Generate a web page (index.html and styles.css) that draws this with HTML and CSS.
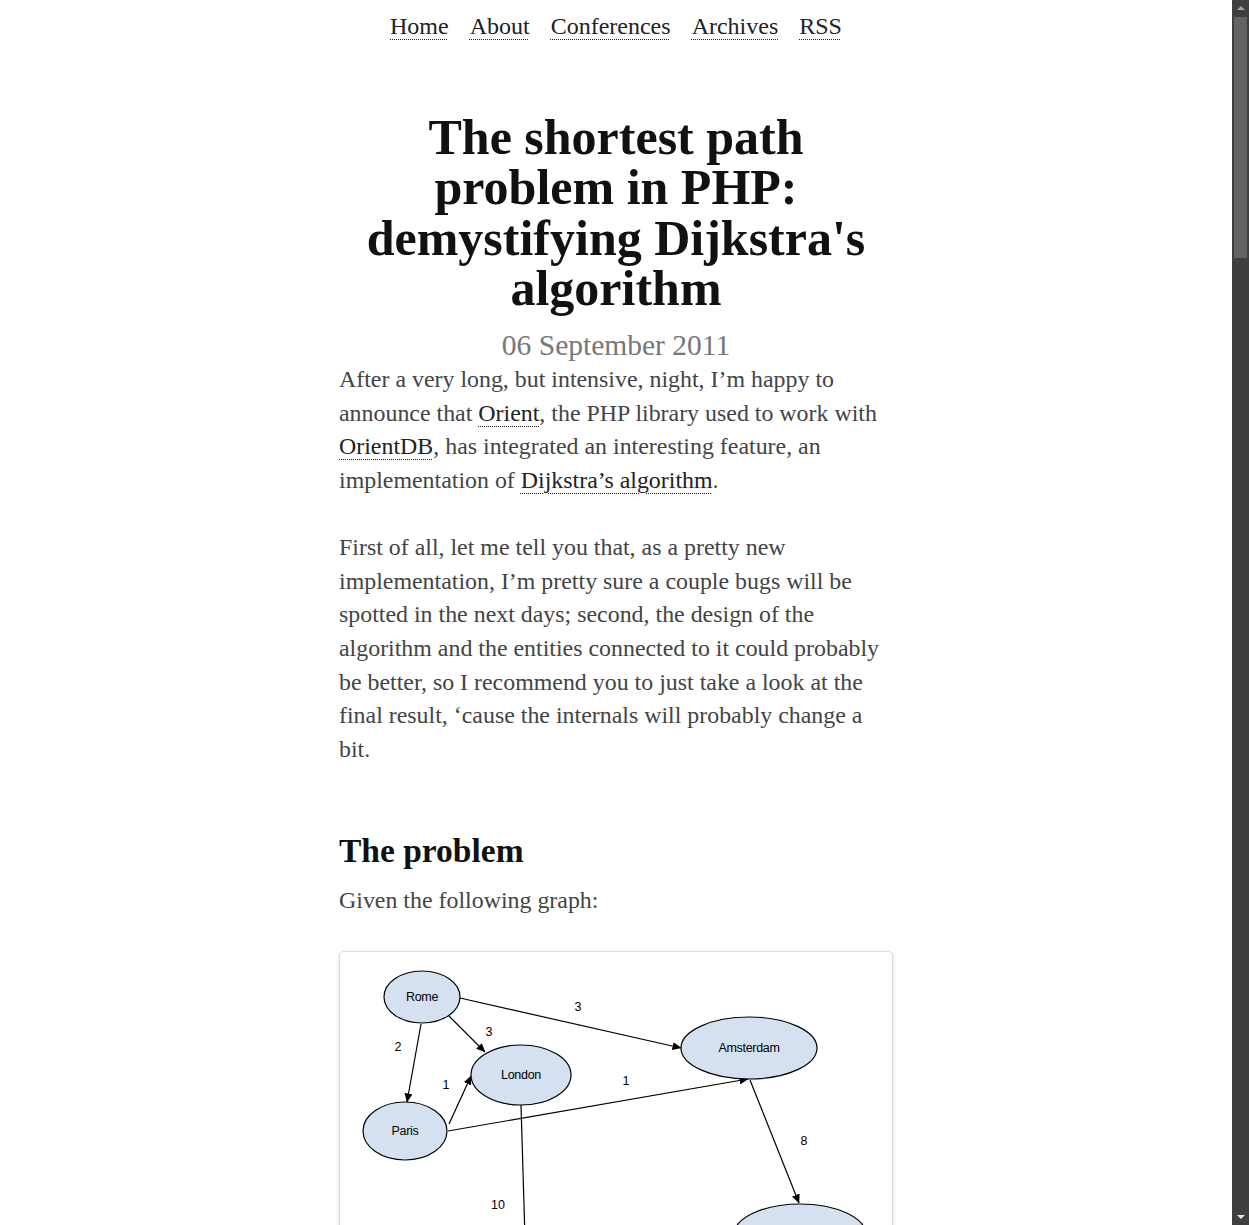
FILE: index.html
```html
<!DOCTYPE html>
<html lang="en">
<head>
<meta charset="utf-8">
<title>The shortest path problem in PHP: demystifying Dijkstra's algorithm</title>
<link rel="stylesheet" href="styles.css">
</head>
<body>
<nav class="site-nav">
  <a href="#">Home</a>
  <a href="#">About</a>
  <a href="#">Conferences</a>
  <a href="#">Archives</a>
  <a href="#">RSS</a>
</nav>

<main class="post">
  <h1 class="post-title">The shortest path problem in PHP: demystifying Dijkstra's algorithm</h1>
  <div class="post-date">06 September 2011</div>

  <p>After a very long, but intensive, night, I’m happy to announce that <a href="#">Orient</a>, the PHP library used to work with <a href="#">OrientDB</a>, has integrated an interesting feature, an implementation of <a href="#">Dijkstra’s algorithm</a>.</p>

  <p>First of all, let me tell you that, as a pretty new implementation, I’m pretty sure a couple bugs will be spotted in the next days; second, the design of the algorithm and the entities connected to it could probably be better, so I recommend you to just take a look at the final result, ‘cause the internals will probably change a bit.</p>

  <h2 class="section-title">The problem</h2>
  <p class="tight">Given the following graph:</p>

  <figure class="graph-figure">
    <svg class="graph" viewBox="0 0 552 420" xmlns="http://www.w3.org/2000/svg">
      <defs>
        <marker id="arrow" markerWidth="9" markerHeight="8" refX="8.5" refY="4" orient="auto" markerUnits="userSpaceOnUse">
          <path d="M0,0 L9,4 L0,8 z" fill="#000"/>
        </marker>
      </defs>
      <g stroke="#000" stroke-width="1.2" fill="none">
        <line x1="120" y1="46" x2="341" y2="96" marker-end="url(#arrow)"/>
        <line x1="109" y1="64" x2="145" y2="100" marker-end="url(#arrow)"/>
        <line x1="81" y1="72" x2="67" y2="150" marker-end="url(#arrow)"/>
        <line x1="109" y1="172" x2="131" y2="124" marker-end="url(#arrow)"/>
        <line x1="108" y1="179" x2="408" y2="127" marker-end="url(#arrow)"/>
        <line x1="410" y1="128" x2="459" y2="251" marker-end="url(#arrow)"/>
        <line x1="181" y1="153" x2="187" y2="352" marker-end="url(#arrow)"/>
      </g>
      <g fill="#d5e1f0" stroke="#000" stroke-width="1.2">
        <ellipse cx="82" cy="45" rx="38" ry="26"/>
        <ellipse cx="181" cy="123" rx="50" ry="30"/>
        <ellipse cx="65" cy="179" rx="42" ry="29"/>
        <ellipse cx="409" cy="96" rx="68" ry="31"/>
        <ellipse cx="460" cy="283" rx="66" ry="31"/>
        <ellipse cx="188" cy="383" rx="62" ry="30"/>
      </g>
      <g class="node-label" text-anchor="middle">
        <text x="82" y="49">Rome</text>
        <text x="181" y="127">London</text>
        <text x="65" y="183">Paris</text>
        <text x="409" y="100">Amsterdam</text>
        <text x="460" y="287">Los Angeles</text>
        <text x="188" y="387">New York</text>
      </g>
      <g class="edge-label" text-anchor="middle">
        <text x="238" y="59">3</text>
        <text x="149" y="84">3</text>
        <text x="58" y="99">2</text>
        <text x="106" y="137">1</text>
        <text x="286" y="133">1</text>
        <text x="464" y="193">8</text>
        <text x="158" y="257">10</text>
      </g>
    </svg>
  </figure>

  <p>which is the shortest path to go from Rome to Los Angeles? Although it seems an easy question to answer by just looking at the graph, things get harder when the graph grows to hundreds or thousands of vertices.</p>

  <h2 class="section-title">The solution</h2>
  <p>Dijkstra’s algorithm solves the single-source shortest path problem for a graph with non-negative edge path costs, producing a shortest path tree: for a given source vertex, it finds the path with the lowest cost between that vertex and every other vertex.</p>

  <p>With Orient, you only need to build the graph, declare the vertices and connect them, specifying the distance of each connection:</p>

  <pre class="code">&lt;?php

$graph  = new Graph();

$rome       = new Vertex('Rome');
$paris      = new Vertex('Paris');
$london     = new Vertex('London');
$amsterdam  = new Vertex('Amsterdam');
$newYork    = new Vertex('New York');
$losAngeles = new Vertex('Los Angeles');

$rome-&gt;connect($paris, 2);
$rome-&gt;connect($london, 3);
$rome-&gt;connect($amsterdam, 3);
$paris-&gt;connect($london, 1);
$paris-&gt;connect($amsterdam, 1);
$london-&gt;connect($newYork, 10);
$amsterdam-&gt;connect($losAngeles, 8);
$newYork-&gt;connect($losAngeles, 2);</pre>

  <p>then, you add all the vertices to the graph and instantiate the algorithm, telling it which is the starting point and which is the destination:</p>

  <pre class="code">$graph-&gt;add($rome);
$graph-&gt;add($paris);
$graph-&gt;add($london);
$graph-&gt;add($amsterdam);
$graph-&gt;add($newYork);
$graph-&gt;add($losAngeles);

$algorithm = new Dijkstra($graph);
$algorithm-&gt;setStartingVertex($rome);
$algorithm-&gt;setEndingVertex($losAngeles);

echo $algorithm-&gt;getLiteralShortestPath();
// Rome - Paris - Amsterdam - Los Angeles

echo $algorithm-&gt;getDistance();
// 11</pre>

  <p>As you see, the API is pretty straightforward: you get the literal representation of the path, a string, or an array of vertices, with <code>getShortestPath()</code>, if you need to work with the objects.</p>

  <h2 class="section-title">How it works</h2>
  <p>The algorithm starts by marking every vertex with an infinite distance, except the starting one, which gets a distance of 0; then, it picks the closest non-visited vertex, calculates the distance of its neighbours, and updates them if the new path is shorter than the one previously found.</p>

  <p>When every vertex has been visited, you just need to walk back from the ending vertex, following the previous vertices that the algorithm stored, to reconstruct the shortest path.</p>

  <p>This is, basically, the whole thing: the implementation is less than 200 lines of code and you can read it on GitHub, along with the tests that I wrote to verify it works as expected.</p>

  <h2 class="section-title">What’s next</h2>
  <p>In the next days I’ll try to clean up the code a bit, write some more tests and, probably, integrate the algorithm with the graph loaded directly from OrientDB, so that you will be able to calculate the shortest path between two records stored in the database.</p>

  <p>If you find bugs or have suggestions, feel free to open an issue or send a pull request: every contribution is welcome.</p>

  <p>In the mood for some more reading?</p>
  <p>...or check the archives.</p>
</main>

<div class="fake-scrollbar" aria-hidden="true">
  <span class="sb-arrow sb-up"></span>
  <span class="sb-thumb"></span>
  <span class="sb-arrow sb-down"></span>
</div>
</body>
</html>
```

FILE: styles.css
```css
html {
  background: #fff;
}

body {
  margin: 8px 17px 0 0;
  font-family: "Liberation Serif", "Times New Roman", serif;
  color: #444;
}

.site-nav {
  display: flex;
  justify-content: center;
  gap: 21px;
  font-size: 24px;
  line-height: 36px;
}

.site-nav a {
  color: #222;
  text-decoration: underline dotted #222;
  text-decoration-thickness: 1px;
  text-underline-offset: 5px;
}

.post {
  width: 554px;
  margin: 0 auto;
  padding-bottom: 200px;
}

.post-title {
  margin: 68px 0 0;
  font-size: 50px;
  line-height: 50.3px;
  font-weight: bold;
  text-align: center;
  color: #111;
}

.post-date {
  margin-top: 14px;
  font-size: 29.5px;
  line-height: 36px;
  text-align: center;
  color: #777;
}

.post p {
  margin: 0 0 33.6px;
  font-size: 23.9px;
  line-height: 33.6px;
}

.post p a {
  color: #222;
  text-decoration: underline dotted #222;
  text-decoration-thickness: 1px;
  text-underline-offset: 5px;
}

.section-title {
  margin: 65px 0 13px;
  font-size: 33.5px;
  line-height: 40px;
  font-weight: bold;
  color: #111;
}

.post p.tight {
  margin-bottom: 33px;
}

.graph-figure {
  margin: 0 0 33.6px;
  border: 1px solid #ddd;
  border-radius: 5px;
  box-shadow: 0 1px 3px rgba(0, 0, 0, 0.18);
  background: #fff;
}

.graph {
  display: block;
  width: 100%;
  height: auto;
}

.node-label {
  font-family: "Liberation Sans", Arial, sans-serif;
  font-size: 12.5px;
  fill: #000;
  letter-spacing: -0.3px;
}

.edge-label {
  font-family: "Liberation Sans", Arial, sans-serif;
  font-size: 12.5px;
  fill: #000;
}

.code {
  margin: 0 0 33.6px;
  padding: 16px 18px;
  background: #f6f6f6;
  border: 1px solid #e2e2e2;
  border-radius: 4px;
  font-family: "Liberation Mono", "Courier New", monospace;
  font-size: 15px;
  line-height: 24px;
  color: #333;
  overflow-x: auto;
}

.post code {
  font-family: "Liberation Mono", "Courier New", monospace;
  font-size: 19px;
}

/* visual replica of the browser's dark scrollbar */
.fake-scrollbar {
  position: fixed;
  top: 0;
  right: 0;
  width: 17px;
  height: 100vh;
  background: #3f3f3f;
}

.sb-thumb {
  position: absolute;
  top: 17px;
  left: 2px;
  width: 13px;
  height: 241px;
  background: #636363;
}

.sb-arrow {
  position: absolute;
  left: 5px;
  width: 0;
  height: 0;
  border-left: 4px solid transparent;
  border-right: 4px solid transparent;
}

.sb-up {
  top: 6px;
  border-bottom: 4px solid #a3a3a3;
}

.sb-down {
  bottom: 6px;
  border-top: 4px solid #e6e6e6;
}
```
